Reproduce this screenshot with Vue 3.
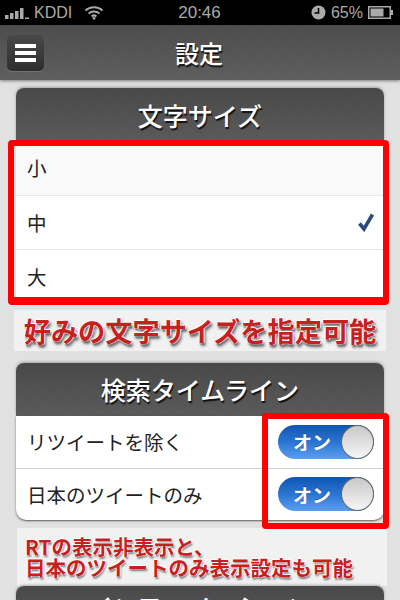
<template>
  <div class="phone">
    <div class="status">
      <div class="status-left">
        <svg class="signal" width="25" height="12" viewBox="0 0 25 12">
          <rect x="0" y="8" width="3.5" height="4" />
          <rect x="5" y="6" width="3.5" height="6" />
          <rect x="10" y="4" width="3.5" height="8" />
          <rect x="15" y="1" width="3.5" height="11" />
          <rect x="20" y="10.5" width="4" height="1.5" />
        </svg>
        <span class="carrier">KDDI</span>
        <svg class="wifi" width="20" height="15" viewBox="0 0 20 15">
          <path d="M1.5 5.5C6 1 14 1 18.5 5.5" />
          <path d="M4.6 8.6C7.5 5.7 12.5 5.7 15.4 8.6" />
          <path d="M7.6 11.4C9 10.2 11 10.2 12.4 11.4" />
          <circle cx="10" cy="13.3" r="1.4" />
        </svg>
      </div>
      <div class="time">20:46</div>
      <div class="status-right">
        <svg width="15" height="15" viewBox="0 0 15 15">
          <circle cx="7.5" cy="7.5" r="7" fill="#aaa" />
          <path d="M7.5 3v5H3.6" fill="none" stroke="#000" stroke-width="1.6" />
        </svg>
        <span class="battery-text">65%</span>
        <svg width="26" height="13" viewBox="0 0 26 13">
          <rect x="0.75" y="0.75" width="21.5" height="11.5" fill="none" stroke="#aaa" stroke-width="1.5" />
          <rect x="2.5" y="2.5" width="13" height="8" fill="#aaa" />
          <rect x="23" y="4" width="2" height="5" fill="#aaa" />
        </svg>
      </div>
    </div>

    <div class="navbar">
      <button class="menu-btn">
        <span></span>
        <span></span>
        <span></span>
      </button>
      <div class="nav-title">設定</div>
    </div>

    <div class="content">
      <div class="head">文字サイズ</div>
      <div class="list size-list">
        <div v-for="size in sizes" :key="size.label" class="size-row" :class="{ first: size.first }">
          <span>{{ size.label }}</span>
          <svg v-if="size.checked" width="18" height="20" viewBox="0 0 18 20">
            <path d="M2.5 11.5L7 17L15.5 2.5" fill="none" stroke="#2b4a78" stroke-width="3.6" />
          </svg>
        </div>
        <div class="frame size-frame"></div>
      </div>
      <div class="note note-one">好みの文字サイズを指定可能</div>

      <div class="head head-search">検索タイムライン</div>
      <div class="list switch-list">
        <div v-for="item in switches" :key="item" class="switch-row">
          <span>{{ item }}</span>
          <div class="toggle">
            <span class="toggle-label">オン</span>
            <span class="knob"></span>
          </div>
        </div>
        <div class="frame switch-frame"></div>
      </div>
      <div class="note note-two">RTの表示非表示と、<br />日本のツイートのみ表示設定も可能</div>

      <div class="head head-last">インフォメーション</div>
    </div>
  </div>
</template>

<script setup>
const sizes = [
  { label: "小", first: true },
  { label: "中", checked: true },
  { label: "大" },
];
const switches = ["リツイートを除く", "日本のツイートのみ"];
</script>

<style>
html,
body {
  margin: 0;
  background: #e0e0e0;
}
</style>

<style scoped>
.phone {
  width: 400px;
  height: 600px;
  overflow: hidden;
  background: #e1e1e1;
  font-family: "Noto Sans CJK JP", "Liberation Sans", sans-serif;
}

.status {
  height: 25px;
  background: #000;
  color: #aaa;
  display: grid;
  grid-template-columns: 1fr auto 1fr;
  align-items: center;
  padding: 0 6px 0 5px;
  box-sizing: border-box;
  font-family: "Liberation Sans", sans-serif;
  font-size: 16px;
}

.status-left {
  display: flex;
  align-items: center;
}

.signal {
  fill: #aaa;
}

.carrier {
  margin-left: 4px;
}

.wifi {
  margin-left: 12px;
  fill: #aaa;
}

.wifi path {
  fill: none;
  stroke: #aaa;
  stroke-width: 2;
}

.time {
  font-size: 17px;
}

.status-right {
  display: flex;
  justify-content: flex-end;
  align-items: center;
}

.battery-text {
  margin: 0 5px;
}

.navbar {
  height: 55px;
  display: flex;
  align-items: center;
  justify-content: center;
  position: relative;
  padding-right: 2px;
  box-sizing: border-box;
  background:
    repeating-linear-gradient(45deg, rgba(255, 255, 255, 0.012) 0 1px, rgba(0, 0, 0, 0.012) 1px 2px),
    linear-gradient(#4c4c4c, #5e5e5e);
  box-shadow: 0 1px 3px rgba(0, 0, 0, 0.45);
}

.menu-btn {
  position: absolute;
  left: 7px;
  top: 10px;
  width: 37px;
  height: 36px;
  padding: 0 8px;
  border: 0;
  border-radius: 5px;
  background: linear-gradient(#484848, #2e2e2e);
  box-shadow: 0 1px 1px rgba(255, 255, 255, 0.15);
  display: flex;
  flex-direction: column;
  justify-content: center;
  gap: 3px;
}

.menu-btn span {
  display: block;
  height: 4px;
  background: #fff;
}

.nav-title,
.head {
  color: #fff;
  font-size: 25px;
  font-weight: 500;
  text-shadow: 1px 2px 1px #111;
}

.nav-title {
  font-size: 24px;
}

.content {
  padding: 8px 16px 0;
}

.head {
  height: 53px;
  display: flex;
  justify-content: center;
  align-items: center;
  box-sizing: border-box;
  border-radius: 8px 8px 0 0;
  background:
    repeating-linear-gradient(45deg, rgba(255, 255, 255, 0.012) 0 1px, rgba(0, 0, 0, 0.012) 1px 2px),
    linear-gradient(#484848, #5a5a5a);
  box-shadow: 0 -1px 3px rgba(0, 0, 0, 0.3);
  white-space: nowrap;
}

.head-last {
  height: 40px;
  align-items: flex-start;
  padding-top: 2px;
}

.list {
  position: relative;
  background: #fff;
  border-radius: 0 0 10px 10px;
  color: #222;
  font-size: 19.5px;
}

.size-row {
  height: 54.5px;
  padding: 0 9px 0 11px;
  display: flex;
  justify-content: space-between;
  align-items: center;
  box-sizing: border-box;
  border-bottom: 1px solid #e6e6e6;
}

.size-row.first {
  background: #f9f9f9;
}

.frame {
  position: absolute;
  box-sizing: border-box;
  border: 6px solid #f00;
  border-radius: 4px;
}

.size-frame {
  left: -8px;
  right: -5px;
  top: -1px;
  bottom: 0;
  border-bottom-width: 8px;
}

.note {
  background: #f1f1f1;
  color: #c6201f;
  font-weight: 700;
  white-space: nowrap;
}

.note-one {
  margin: 5px -2px 12px;
  height: 41px;
  font-size: 27.2px;
  line-height: 41px;
  text-align: center;
  text-shadow: 1px 0 1px #fff, -1px 0 1px #fff, 0 -1px 1px #fff, 1px 2px 2px #666, 2px 3px 3px #888;
}

.switch-row {
  height: 53px;
  padding: 0 10px 0 11px;
  display: flex;
  justify-content: space-between;
  align-items: center;
  box-sizing: border-box;
  border-bottom: 1px solid #cfcfcf;
}

.switch-row + .switch-row {
  height: 51px;
  border-bottom: 0;
}

.switch-list {
  box-shadow: 0 1px 2px rgba(0, 0, 0, 0.6);
}

.toggle {
  width: 96px;
  height: 34px;
  box-sizing: border-box;
  border-radius: 17px;
  background: linear-gradient(#0f56b0 0%, #2a74d2 50%, #5a9ff0 100%);
  display: flex;
  justify-content: space-between;
  align-items: center;
  padding-left: 15px;
}

.toggle-label {
  color: #fff;
  font-size: 19px;
  font-weight: 700;
  text-shadow: 0 -1px 0 rgba(0, 0, 0, 0.35);
}

.knob {
  width: 33px;
  height: 34px;
  box-sizing: border-box;
  border: 1px solid #666;
  border-radius: 50%;
  background: linear-gradient(#c8c8c8, #f6f6f6);
}

.switch-frame {
  right: -5px;
  top: -3px;
  bottom: -9px;
  width: 127px;
}

.note-two {
  margin: 8px -3px 0 1px;
  height: 58px;
  box-sizing: border-box;
  padding: 8px 0 0 8px;
  font-size: 20.5px;
  line-height: 21px;
  text-shadow: 1px 0 1px #fff, -1px 0 1px #fff, 0 -1px 1px #fff, 1px 2px 2px #777;
}
</style>
